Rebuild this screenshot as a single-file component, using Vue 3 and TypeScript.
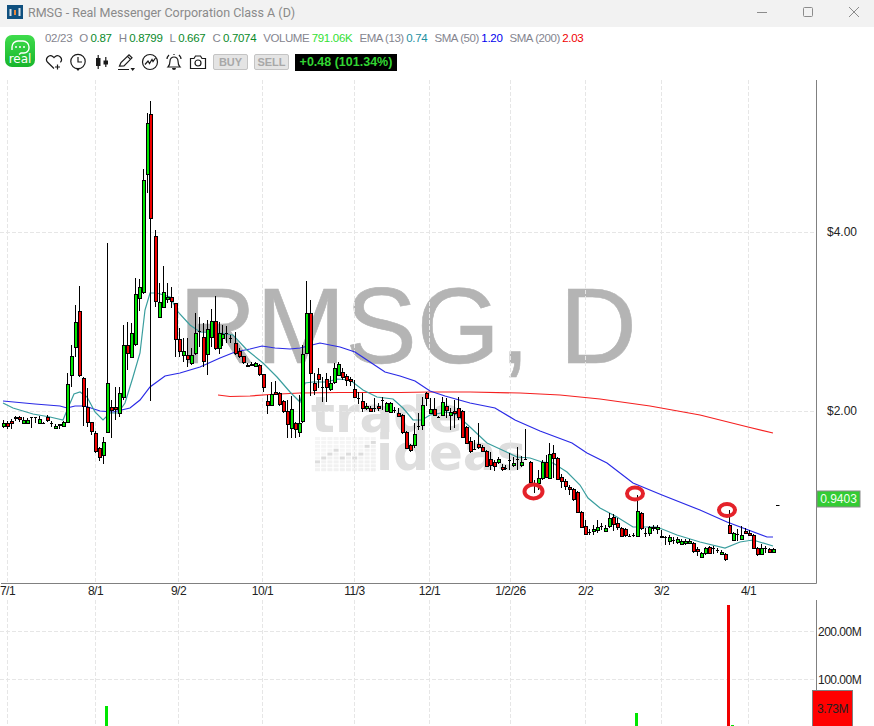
<script setup lang="ts">
type Candle = [number, number, number, number, number, 'g' | 'r']

// x, body top, body bottom, wick top, wick bottom, colour (all in chart pixels)
const candles: Candle[] = [
  [3, 423, 426, 420, 428, 'g'], [7, 423, 426, 421, 429, 'r'], [11, 421, 423, 419, 429, 'r'], [15, 417, 418, 416, 421, 'r'],
  [19, 417, 419, 416, 422, 'r'], [23, 420, 423, 417, 424, 'g'], [27, 420, 423, 418, 424, 'g'], [31, 417, 417, 417, 428, 'r'],
  [35, 417, 417, 417, 423, 'r'], [39, 419, 423, 416, 424, 'g'], [43, 423, 423, 422, 424, 'r'], [47, 417, 420, 415, 422, 'r'],
  [51, 423, 423, 421, 427, 'r'], [55, 426, 428, 424, 429, 'g'], [59, 424, 425, 424, 429, 'g'], [63, 422, 426, 421, 427, 'g'],
  [67, 384, 422, 373, 423, 'g'], [71, 356, 375, 345, 387, 'g'], [75, 322, 347, 305, 357, 'g'], [79, 311, 375, 286, 377, 'r'],
  [83, 378, 406, 377, 426, 'r'], [87, 407, 422, 388, 427, 'r'], [91, 422, 431, 422, 435, 'r'], [95, 433, 451, 431, 453, 'r'],
  [99, 448, 457, 447, 461, 'r'], [103, 442, 455, 437, 464, 'g'], [107, 383, 432, 243, 432, 'g'], [111, 407, 410, 400, 438, 'r'],
  [115, 407, 409, 387, 420, 'r'], [119, 393, 413, 387, 417, 'g'], [123, 345, 397, 325, 400, 'g'], [127, 345, 353, 322, 370, 'r'],
  [131, 333, 357, 323, 358, 'g'], [135, 294, 344, 278, 346, 'g'], [139, 287, 298, 279, 311, 'g'], [143, 180, 292, 169, 294, 'g'],
  [147, 123, 174, 113, 193, 'g'], [150, 114, 218, 101, 401, 'r'], [155, 236, 301, 230, 307, 'r'], [159, 302, 317, 283, 318, 'g'],
  [163, 292, 307, 266, 308, 'g'], [167, 297, 299, 283, 303, 'g'], [171, 297, 301, 287, 308, 'r'], [175, 303, 339, 303, 357, 'r'],
  [179, 339, 351, 328, 357, 'r'], [183, 351, 355, 338, 362, 'g'], [187, 355, 359, 338, 367, 'r'], [191, 355, 363, 348, 365, 'g'],
  [195, 333, 353, 313, 355, 'g'], [199, 331, 331, 317, 347, 'r'], [203, 337, 361, 323, 367, 'r'], [207, 329, 354, 320, 375, 'g'],
  [211, 321, 337, 309, 347, 'g'], [215, 321, 348, 296, 350, 'r'], [219, 333, 348, 322, 354, 'g'], [222, 334, 338, 325, 346, 'g'],
  [226, 333, 333, 326, 343, 'r'], [230, 338, 338, 335, 343, 'r'], [235, 343, 353, 332, 355, 'r'], [239, 351, 356, 348, 358, 'r'],
  [243, 356, 362, 356, 364, 'r'], [247, 365, 366, 363, 367, 'r'], [251, 364, 365, 362, 366, 'r'], [255, 363, 366, 362, 367, 'g'],
  [259, 365, 374, 364, 376, 'r'], [263, 374, 387, 374, 392, 'r'], [267, 401, 405, 395, 414, 'r'], [271, 394, 405, 382, 405, 'g'],
  [275, 392, 394, 381, 395, 'r'], [279, 393, 404, 392, 406, 'r'], [283, 401, 411, 400, 413, 'r'], [287, 411, 424, 400, 438, 'r'],
  [291, 409, 428, 396, 438, 'g'], [295, 423, 429, 422, 438, 'r'], [299, 423, 432, 395, 437, 'g'],
  [302, 354, 421, 345, 423, 'g'], [306, 313, 353, 281, 354, 'g'], [310, 313, 373, 300, 396, 'r'], [314, 383, 390, 373, 395, 'r'],
  [318, 374, 379, 368, 388, 'r'], [322, 387, 387, 377, 402, 'r'], [326, 379, 387, 373, 402, 'r'], [330, 383, 389, 376, 391, 'g'],
  [334, 368, 382, 363, 384, 'g'], [338, 364, 375, 362, 376, 'g'], [342, 372, 377, 368, 380, 'r'], [346, 376, 380, 374, 386, 'r'],
  [350, 379, 381, 377, 386, 'r'], [354, 389, 397, 380, 398, 'r'], [358, 398, 398, 392, 404, 'r'], [362, 401, 408, 393, 412, 'r'],
  [366, 406, 408, 403, 410, 'g'], [370, 408, 411, 406, 412, 'r'], [374, 408, 408, 398, 412, 'r'], [378, 406, 408, 403, 411, 'r'],
  [382, 400, 400, 397, 410, 'r'], [386, 403, 411, 402, 412, 'g'], [390, 403, 412, 402, 413, 'g'], [394, 410, 410, 407, 413, 'r'],
  [398, 413, 416, 408, 417, 'r'], [402, 415, 432, 414, 434, 'r'], [406, 432, 448, 431, 449, 'r'], [410, 445, 450, 444, 452, 'r'],
  [414, 434, 445, 423, 448, 'g'], [418, 426, 426, 413, 430, 'r'], [422, 405, 425, 397, 430, 'g'], [426, 393, 398, 392, 406, 'r'],
  [430, 409, 413, 398, 414, 'g'], [434, 409, 415, 398, 416, 'r'], [438, 417, 417, 416, 418, 'r'], [442, 402, 415, 397, 416, 'g'],
  [446, 406, 410, 398, 418, 'r'], [450, 412, 415, 408, 430, 'g'], [454, 411, 413, 400, 428, 'r'], [458, 408, 417, 397, 420, 'r'],
  [462, 411, 437, 410, 438, 'r'], [466, 427, 443, 426, 444, 'r'], [470, 441, 451, 437, 453, 'r'], [474, 449, 449, 440, 450, 'r'],
  [478, 444, 447, 423, 449, 'r'], [482, 447, 451, 445, 452, 'r'], [486, 451, 466, 450, 467, 'r'], [490, 459, 465, 452, 470, 'r'],
  [494, 462, 466, 460, 471, 'r'], [498, 459, 462, 457, 464, 'g'],
  [502, 467, 469, 464, 471, 'r'], [505, 468, 468, 465, 470, 'r'], [509, 460, 460, 453, 470, 'r'], [513, 463, 465, 457, 467, 'g'],
  [517, 459, 459, 447, 470, 'r'], [521, 462, 465, 456, 467, 'g'], [525, 459, 459, 429, 460, 'r'], [530, 462, 482, 461, 484, 'r'],
  [534, 483, 483, 480, 493, 'r'], [538, 478, 483, 470, 490, 'g'], [542, 462, 478, 460, 480, 'g'], [546, 462, 477, 455, 478, 'r'],
  [549, 454, 478, 443, 479, 'g'], [553, 453, 458, 445, 478, 'r'], [557, 458, 479, 457, 480, 'r'], [561, 477, 481, 474, 488, 'r'],
  [565, 481, 486, 479, 490, 'r'], [569, 487, 489, 485, 495, 'r'], [573, 489, 499, 488, 501, 'r'], [577, 492, 512, 491, 513, 'r'],
  [581, 512, 527, 511, 528, 'r'], [585, 526, 534, 520, 535, 'r'], [589, 532, 532, 529, 535, 'r'], [593, 529, 531, 525, 535, 'g'],
  [597, 527, 530, 520, 533, 'g'], [601, 526, 526, 523, 530, 'r'], [605, 528, 531, 525, 532, 'g'], [609, 518, 526, 513, 528, 'g'],
  [613, 517, 524, 514, 531, 'r'], [617, 523, 527, 518, 530, 'r'], [621, 528, 536, 527, 537, 'r'], [625, 529, 535, 528, 537, 'r'],
  [629, 536, 536, 534, 537, 'r'], [633, 535, 535, 533, 537, 'r'], [637, 511, 536, 495, 537, 'g'], [641, 513, 528, 512, 530, 'r'],
  [645, 533, 533, 528, 537, 'r'], [649, 527, 533, 526, 536, 'g'], [653, 527, 528, 525, 531, 'g'], [657, 527, 529, 525, 534, 'g'],
  [661, 536, 537, 530, 538, 'g'], [665, 537, 537, 536, 545, 'r'], [669, 537, 541, 535, 545, 'g'], [673, 540, 540, 537, 544, 'r'],
  [677, 539, 542, 537, 544, 'g'], [681, 541, 544, 539, 545, 'g'], [685, 541, 543, 539, 545, 'g'], [689, 541, 543, 539, 544, 'g'],
  [693, 543, 551, 542, 553, 'r'], [697, 549, 551, 547, 556, 'r'], [701, 553, 557, 552, 558, 'g'], [705, 548, 553, 547, 555, 'g'],
  [709, 547, 553, 546, 554, 'r'], [713, 548, 548, 546, 554, 'r'], [717, 550, 550, 548, 553, 'r'], [721, 552, 554, 550, 555, 'g'],
  [725, 554, 559, 553, 561, 'r'], [729, 525, 533, 510, 534, 'r'], [733, 533, 540, 532, 541, 'g'], [737, 534, 534, 529, 541, 'r'],
  [741, 535, 539, 526, 540, 'g'], [745, 531, 533, 528, 534, 'r'], [749, 533, 535, 530, 536, 'r'], [753, 535, 548, 534, 549, 'r'],
  [757, 548, 554, 547, 556, 'r'], [761, 548, 554, 544, 555, 'g'], [765, 548, 548, 546, 553, 'r'], [769, 549, 552, 548, 553, 'r'],
  [773, 549, 552, 548, 553, 'g'],
]

const ema13 = '3,403 13,408 33,414 50,417 63,420 68,408 74,394 80,392 87,397 95,412 103,420 110,413 118,413 125,403 133,377 140,353 145,310 150,293 157,293 170,297 178,312 190,325 200,332 220,333 233,335 247,350 263,363 277,377 290,392 300,402 305,383 313,382 327,382 337,379 350,380 363,390 377,397 393,399 403,408 413,420 422,420 430,415 447,412 457,415 470,427 487,443 500,449 517,457 530,458 542,462 553,463 567,472 580,485 588,498 600,508 617,517 633,527 657,527 677,535 700,542 725,548 740,542 753,540 773,546'
const sma50 = '3,401 35,404 60,406 67,408 75,406 85,406 100,411 113,412 130,408 140,400 150,387 165,376 180,373 200,367 220,358 235,352 250,349 262,346 275,348 290,349 300,348 320,343 340,347 355,352 370,362 385,372 400,376 415,381 430,391 445,396 470,403 495,408 515,420 540,431 572,443 587,453 607,463 633,483 662,495 700,510 727,522 767,537 773,537'
const sma200 = '218,395 230,396.5 250,396 270,394.5 300,393 340,392.5 400,392.5 430,392 470,392 520,393 560,395 600,399 650,406 700,415 748,427 773,433'

const dateTicks = [
  { x: 7.5, label: '7/1' }, { x: 95.5, label: '8/1' }, { x: 178.5, label: '9/2' }, { x: 262.5, label: '10/1' },
  { x: 354.5, label: '11/3' }, { x: 429.5, label: '12/1' }, { x: 510.5, label: '1/2/26' }, { x: 585.5, label: '2/2' },
  { x: 661.5, label: '3/2' }, { x: 748.5, label: '4/1' },
]

// "equalizer" part of the background watermark
const eqLevels = [2, 3, 4, 5, 3, 4, 3, 4, 6, 7]
const eqCells = eqLevels.flatMap((level, col) =>
  Array.from({ length: 9 }, (_, row) => ({
    x: 315 + col * 6.2,
    y: 437 + row * 3.9,
    fill: 8 - row === level ? '#dcdcdc' : 8 - row < level ? '#f1f1f1' : '#f5f5f5',
  })),
)

const readouts = [
  { text: '02/23', cls: 'lbl' }, { text: 'O', cls: 'lbl gap' }, { text: '0.87', cls: 'val' },
  { text: 'H', cls: 'lbl gap' }, { text: '0.8799', cls: 'val' }, { text: 'L', cls: 'lbl gap' }, { text: '0.667', cls: 'val' },
  { text: 'C', cls: 'lbl gap' }, { text: '0.7074', cls: 'val' }, { text: 'VOLUME', cls: 'lbl gap wide' }, { text: '791.06K', cls: 'vol' },
  { text: 'EMA (13)', cls: 'lbl gap wide' }, { text: '0.74', cls: 'ema' }, { text: 'SMA (50)', cls: 'lbl gap wide' }, { text: '1.20', cls: 'sma' },
  { text: 'SMA (200)', cls: 'lbl gap wide' }, { text: '2.03', cls: 'red' },
]
</script>

<template>
  <div class="window">
    <div class="titlebar">
      <svg class="app-icon" width="16" height="14" viewBox="0 0 16 14">
        <rect width="16" height="14" fill="#10507f" />
        <rect x="2.5" y="4" width="2" height="7" fill="#d9dfe6" />
        <rect x="7" y="5" width="2" height="5" fill="#e8863a" />
        <rect x="11.5" y="3" width="2" height="8" fill="#d9dfe6" />
      </svg>
      <span class="title">RMSG - Real Messenger Corporation Class A (D)</span>
      <div class="controls">
        <svg width="12" height="12" viewBox="0 0 12 12"><path d="M1 6.5h10" stroke="#8c8c8c" fill="none" /></svg>
        <svg width="12" height="12" viewBox="0 0 12 12"><rect x="1.5" y="1.5" width="9" height="9" rx="1" stroke="#8c8c8c" fill="none" /></svg>
        <svg width="12" height="12" viewBox="0 0 12 12"><path d="M1 1l10 10M11 1L1 11" stroke="#8c8c8c" fill="none" /></svg>
      </div>
    </div>

    <div class="header">
      <svg class="logo" width="30" height="32" viewBox="0 0 30 32">
        <defs>
          <linearGradient id="logoFill" x1="0" y1="0" x2="0" y2="1">
            <stop offset="0" stop-color="#3fdc4c" />
            <stop offset="1" stop-color="#17b52c" />
          </linearGradient>
        </defs>
        <rect width="30" height="32" rx="7" fill="url(#logoFill)" />
        <path d="M7 15v-3a6 6 0 0 1 6-6h5a6 6 0 0 1 6 6v1a5 5 0 0 1-5 5h-3l-2 1.5" fill="none" stroke="#fff" stroke-width="1.4" />
        <circle cx="11" cy="12" r="1" fill="#fff" />
        <circle cx="15" cy="12" r="1" fill="#fff" />
        <circle cx="19" cy="12" r="1" fill="#fff" />
        <text x="15" y="28" text-anchor="middle" class="logo-text">real</text>
      </svg>

      <div class="header-main">
        <div class="info">
          <span v-for="item in readouts" :key="item.text" :class="item.cls">{{ item.text }}</span>
        </div>
        <div class="tools">
          <svg class="tool" viewBox="0 0 18 18"><path d="M9 15.5 2.6 9.3A3.9 3.9 0 0 1 8 3.7l1 1 1-1a3.9 3.9 0 0 1 5.4 5.6M12.5 11.5v5M10 14h5" /></svg>
          <svg class="tool" viewBox="0 0 18 18"><circle cx="9" cy="8.5" r="7.2" /><path d="M9 4v5h4" /><path class="solid" d="M6.5 15h5L9 18z" /></svg>
          <svg class="tool" viewBox="0 0 18 18"><path class="solid" d="M3 5h4.5v8H3zM10.500 7.500H15v4h-4.500z" /><path d="M5.200 2v14M12.800 4v10" /></svg>
          <svg class="tool" viewBox="0 0 18 18"><path d="M2.500 13 4 9.500 12 1.800l3 3-8 8zM10.500 3.300l3 3M1 16.500h11" /><path class="solid" d="M13.500 15h4.500L15.700 18z" /></svg>
          <svg class="tool" viewBox="0 0 18 18"><circle cx="9" cy="9" r="7.500" /><path d="M4 11.500 7 8l1.500 2.500L11 6.500l1 2L14.500 5" /></svg>
          <svg class="tool" viewBox="0 0 18 18"><path d="M3 14h12c-1.500-1.500-2-3-2-6a4 4 0 0 0-8 0c0 3-.5 4.500-2 6zM9 2V1M2 6c0-2 1-3 2-4M16 6c0-2-1-3-2-4" /><path class="solid" d="M7 15h4a2 2 0 0 1-4 0z" /></svg>
          <svg class="tool" viewBox="0 0 18 18"><path d="M1.500 5.500h3.500L6.500 3h5L13 5.500h3.500v10h-15z" /><circle cx="9" cy="10" r="3" /></svg>
          <span class="trade-btn">BUY</span>
          <span class="trade-btn">SELL</span>
          <span class="change">+0.48 (101.34%)</span>
        </div>
      </div>
    </div>

    <svg class="chart" width="874" height="646" viewBox="0 80 874 646">
      <!-- watermarks -->
      <text x="179" y="363" class="wm-main">RMSG, D</text>
      <text x="311" y="432" class="wm-brand">trade</text>
      <text x="376" y="470" class="wm-brand">ideas</text>
      <rect v-for="(c, i) in eqCells" :key="i" :x="c.x" :y="c.y" width="5" height="3" :fill="c.fill" />

      <!-- grid -->
      <g class="grid">
        <path v-for="t in dateTicks" :key="t.label" :d="`M${t.x} 80V583M${t.x} 600V726`" />
        <path d="M0 232.500H816M0 411.500H816M0 631.500H816M0 679.500H816" />
      </g>

      <!-- axes -->
      <path class="axis" d="M816.500 80V583.500H1M816.500 600V691" />
      <text v-for="t in dateTicks" :key="t.label" :x="t.x" y="595" text-anchor="middle" class="axis-text tight">{{ t.label }}</text>
      <text x="827" y="236" class="axis-text">$4.00</text>
      <text x="827" y="415" class="axis-text">$2.00</text>
      <text x="818" y="636" class="axis-text tight">200.00M</text>
      <text x="818" y="684" class="axis-text tight">100.00M</text>

      <!-- moving averages -->
      <polyline :points="sma200" class="ma" stroke="#f52020" />
      <polyline :points="sma50" class="ma" stroke="#2a2ae6" />
      <polyline :points="ema13" class="ma" stroke="#3a9e9e" />

      <!-- candles -->
      <g v-for="c in candles" :key="c[0]" shape-rendering="crispEdges">
        <path :d="`M${c[0] + 0.5} ${c[3]}V${c[4]}`" stroke="#000" />
        <rect
          v-if="c[2] > c[1]"
          :x="c[0] - 0.5"
          :y="c[1] + 0.5"
          width="3"
          :height="c[2] - c[1]"
          :fill="c[5] === 'g' ? '#00e600' : '#f00000'"
          stroke="#000"
        />
        <path v-else :d="`M${c[0] - 1} ${c[1] + 0.5}H${c[0] + 2}`" stroke="#000" />
      </g>
      <path d="M776 505.500h3.500" stroke="#000" />

      <!-- hand drawn markers -->
      <ellipse cx="533.500" cy="491.500" rx="9" ry="7" class="marker" />
      <ellipse cx="635" cy="493.500" rx="8" ry="6" class="marker" />
      <ellipse cx="727" cy="510" rx="8" ry="6" class="marker" />

      <!-- last price -->
      <rect x="817" y="491" width="43" height="16" fill="#33cc33" stroke="#8a8a8a" />
      <text x="838.500" y="503" text-anchor="middle" class="price-text">0.9403</text>

      <!-- volume -->
      <rect x="105" y="706" width="3" height="20" fill="#00e600" />
      <rect x="635" y="713" width="3" height="13" fill="#00e600" />
      <rect x="727" y="605" width="3" height="121" fill="#f00000" />
      <rect x="731" y="725" width="3" height="1" fill="#00e600" />
      <rect x="812.500" y="690.500" width="40" height="40" fill="#ff0000" stroke="#7f7f7f" />
      <text x="832.500" y="713" text-anchor="middle" class="axis-text tight">3.73M</text>
    </svg>
  </div>
</template>

<style scoped>
.window {
  width: 874px;
  height: 726px;
  overflow: hidden;
  background: #fff;
  font-family: "Liberation Sans", Arial, sans-serif;
}

.titlebar {
  display: flex;
  align-items: center;
  height: 27px;
  box-sizing: border-box;
  padding: 0 14px 3px 7px;
  background: #f2f2f2;
}

.app-icon {
  margin-right: 5px;
}

.title {
  font-family: Roboto, sans-serif;
  font-size: 12.5px;
  color: #8a8a8a;
}

.controls {
  display: flex;
  gap: 34px;
  margin-left: auto;
  margin-bottom: 1px;
}

.header {
  display: flex;
  height: 53px;
  padding: 4px 0 0 5px;
  box-sizing: border-box;
}

.logo {
  margin-top: 4px;
}

.logo-text {
  font-family: "DejaVu Sans", sans-serif;
  font-size: 12px;
  fill: #fff;
}

.header-main {
  margin-left: 10px;
}

.info {
  display: flex;
  height: 14px;
  font-size: 11.5px;
  line-height: 14px;
  letter-spacing: -0.3px;
  white-space: nowrap;
}

.info span {
  margin-right: 2.5px;
}

.info .gap {
  margin-left: 4.5px;
}

.info .wide {
  letter-spacing: -0.45px;
}

.lbl { color: #85858f; }
.val { color: #0a8a2a; }
.vol { color: #33e033; }
.ema { color: #1d8f9f; }
.sma { color: #0000ee; }
.red { color: #f00000; }

.tools {
  display: flex;
  align-items: center;
  gap: 6px;
  margin-top: 8px;
  height: 18px;
}

.tool {
  width: 18px;
  height: 18px;
  fill: none;
  stroke: #1a1a1a;
  stroke-width: 1.2;
  flex: none;
}

.tool .solid {
  fill: #1a1a1a;
  stroke: none;
}

.trade-btn {
  width: 35px;
  height: 16px;
  box-sizing: border-box;
  border: 1px solid #c4c4c4;
  border-radius: 2px;
  background: #e4e4e4;
  color: #a8a8a8;
  font-size: 11px;
  font-weight: bold;
  line-height: 14px;
  text-align: center;
}

.change {
  height: 17px;
  width: 102px;
  background: #000;
  color: #33d633;
  font-size: 12.5px;
  font-weight: bold;
  line-height: 17px;
  text-align: center;
}

.chart {
  display: block;
}

.wm-main {
  font-family: "Liberation Sans", sans-serif;
  font-size: 107px;
  fill: #b4b4b4;
  stroke: #b4b4b4;
  stroke-width: 0.6;
}

.wm-brand {
  font-family: "DejaVu Sans", sans-serif;
  font-size: 50px;
  font-weight: bold;
  fill: #dedede;
}

.grid path {
  fill: none;
  stroke: #e6e6e6;
  stroke-dasharray: 4 2;
}

.axis {
  fill: none;
  stroke: #808080;
  stroke-width: 1;
}

.axis-text {
  font-family: "Liberation Sans", sans-serif;
  font-size: 12px;
  fill: #222;
}

.tight {
  letter-spacing: -0.5px;
}

.price-text {
  font-family: "Liberation Sans", sans-serif;
  font-size: 12px;
  fill: #f2fff2;
}

.ma {
  fill: none;
  stroke-width: 1.2;
}

.marker {
  fill: none;
  stroke: #e4222a;
  stroke-width: 4;
}
</style>
